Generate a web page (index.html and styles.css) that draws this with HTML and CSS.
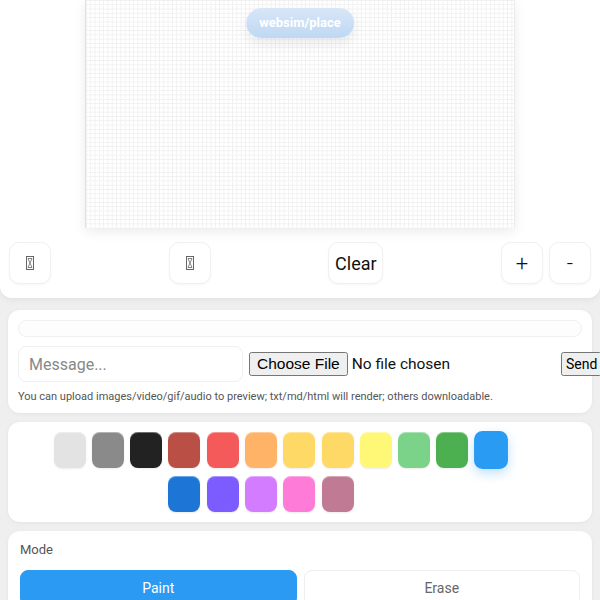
FILE: index.html
```html
<!DOCTYPE html>
<html lang="en">
<head>
  <meta charset="UTF-8">
  <meta name="viewport" content="width=device-width, initial-scale=1.0">
  <title>websim/place</title>
  <link rel="stylesheet" href="styles.css">
</head>
<body>
  <!-- Board -->
  <div class="board-card">
    <div class="board">
      <div class="badge">websim/place</div>
    </div>
    <div class="controls">
      <button class="ctl" title="Undo">
        <svg width="8" height="14" viewBox="0 0 8 14"><rect x="0.5" y="0.5" width="7" height="13" fill="none" stroke="#666" stroke-width="1"/><path d="M2 2.5 H6 L4 7 L6 11.5 H2 L4 7 Z" fill="none" stroke="#777" stroke-width="0.9"/></svg>
      </button>
      <button class="ctl" title="Redo">
        <svg width="8" height="14" viewBox="0 0 8 14"><rect x="0.5" y="0.5" width="7" height="13" fill="none" stroke="#666" stroke-width="1"/><path d="M2 2.5 H6 L4 7 L6 11.5 H2 L4 7 Z" fill="none" stroke="#777" stroke-width="0.9"/></svg>
      </button>
      <button class="ctl clear">Clear</button>
      <div class="zoom">
        <button class="ctl big">+</button>
        <button class="ctl big">-</button>
      </div>
    </div>
  </div>

  <!-- Chat -->
  <div class="card chat">
    <div class="messages"></div>
    <div class="compose">
      <input type="text" class="msg-input" placeholder="Message...">
      <input type="file" class="file-input">
      <button class="send">Send</button>
    </div>
    <p class="hint">You can upload images/video/gif/audio to preview; txt/md/html will render; others downloadable.</p>
  </div>

  <!-- Palette -->
  <div class="card palette-card">
    <div class="palette" id="palette"></div>
  </div>

  <!-- Mode -->
  <div class="card mode-card">
    <div class="label">Mode</div>
    <div class="modes">
      <button class="mode active">Paint</button>
      <button class="mode">Erase</button>
    </div>
  </div>

  <script>
    const colors = [
      '#ffffff', '#e3e3e3', '#8a8a8a', '#222222', '#b94f45', '#f45a5a', '#ffb366',
      '#ffd966', '#ffd966', '#fff877', '#7bd38a', '#4caf50', '#2a9bf2',
      '#1d76d6', '#7d5cff', '#d47cff', '#ff7bd8', '#c07a93'
    ];
    const palette = document.getElementById('palette');
    colors.forEach((c, i) => {
      const s = document.createElement('div');
      s.className = 'swatch' + (c === '#2a9bf2' ? ' selected' : '') + (i === 0 ? ' blank' : '');
      s.style.background = c;
      palette.appendChild(s);
    });
  </script>
</body>
</html>
```

FILE: styles.css
```css
* {
  box-sizing: border-box;
  margin: 0;
  padding: 0;
}

body {
  font-family: Roboto, "Liberation Sans", sans-serif;
  background: #efefef;
  color: #333;
  width: 600px;
  overflow: hidden;
}

.board-card {
  background: #fff;
  border-radius: 0 0 12px 12px;
  padding-bottom: 14px;
  box-shadow: 0 2px 6px rgba(0, 0, 0, 0.06);
}

.board {
  position: relative;
  width: 430px;
  height: 228px;
  margin: 0 auto;
  background-color: #fff;
  background-image:
    linear-gradient(to right, #f0f0f0 1px, transparent 1px),
    linear-gradient(to bottom, #f0f0f0 1px, transparent 1px);
  background-size: 4.3px 4.3px;
  border-left: 1px solid #e2e2e2;
  border-right: 1px solid #ececec;
  box-shadow: 0 4px 12px rgba(0, 0, 0, 0.08);
}

.badge {
  position: absolute;
  top: 8px;
  left: 50%;
  transform: translateX(-50%);
  padding: 0 13px;
  height: 30px;
  line-height: 30px;
  border-radius: 15px;
  background: linear-gradient(#d8e6f7, #bfd8f4);
  color: #fff;
  font-size: 13px;
  font-weight: bold;
  box-shadow: 0 6px 12px rgba(0, 0, 0, 0.07);
  white-space: nowrap;
}

.controls {
  display: flex;
  justify-content: space-between;
  align-items: center;
  padding: 14px 9px 0;
}

.zoom {
  display: flex;
  gap: 6px;
}

.ctl {
  min-width: 42px;
  height: 42px;
  padding: 0 8px;
  background: #fff;
  border: 1px solid #f0f0f0;
  border-radius: 10px;
  box-shadow: 0 1px 2px rgba(0, 0, 0, 0.04);
  font-family: Roboto, "Liberation Sans", sans-serif;
  color: #111;
  display: flex;
  align-items: center;
  justify-content: center;
}

.ctl.clear {
  width: 55px;
  font-size: 18px;
}

.ctl.big {
  font-size: 22px;
  font-weight: 300;
}

.card {
  background: #fff;
  border-radius: 12px;
  margin: 9px 8px 0;
  padding: 10px;
  box-shadow: 0 1px 4px rgba(0, 0, 0, 0.05);
}

.chat {
  margin-top: 12px;
  height: 103px;
}

.messages {
  height: 17px;
  border: 1px solid #f0f0f0;
  border-radius: 9px;
  background: #fdfdfd;
}

.compose {
  display: flex;
  align-items: center;
  gap: 6px;
  margin-top: 9px;
}

.msg-input {
  flex: 0 0 224px;
  height: 36px;
  border: 1px solid #f0f0f0;
  border-radius: 8px;
  padding: 0 10px;
  font-family: Roboto, "Liberation Sans", sans-serif;
  font-size: 16px;
  color: #333;
}

.msg-input::placeholder {
  color: #888;
}

.file-input {
  flex: 0 0 306px;
  font-family: Roboto, "Liberation Sans", sans-serif;
  font-size: 15.5px;
  color: #111;
}

.send {
  flex: 0 0 auto;
  font-family: Roboto, "Liberation Sans", sans-serif;
  font-size: 14px;
  padding: 2px 3px;
}

.hint {
  margin-top: 8px;
  font-size: 11px;
  color: #555;
}

.palette-card {
  padding: 10px 8px 10px 6px;
}

.palette {
  display: flex;
  flex-wrap: wrap;
  justify-content: center;
  gap: 8px 6.3px;
  width: 494px;
}

.swatch {
  width: 32px;
  height: 36px;
  border-radius: 8px;
  box-shadow: inset 0 1px 0 rgba(255, 255, 255, 0.35), 0 1px 2px rgba(0, 0, 0, 0.08);
}

.swatch.blank {
  box-shadow: none;
}

.swatch.selected {
  transform: scale(1.06);
  box-shadow: 0 4px 10px rgba(42, 155, 242, 0.3);
}

.mode-card {
  padding: 11px 12px 20px;
}

.label {
  font-size: 13px;
  color: #555;
}

.modes {
  display: flex;
  gap: 7px;
  margin-top: 13px;
}

.mode {
  flex: 1;
  height: 36px;
  border: 1px solid #eee;
  border-radius: 8px;
  background: #fff;
  color: #666;
  font-family: Roboto, "Liberation Sans", sans-serif;
  font-size: 14px;
}

.mode.active {
  background: #2b9af3;
  border-color: #2b9af3;
  color: #fff;
}
```
